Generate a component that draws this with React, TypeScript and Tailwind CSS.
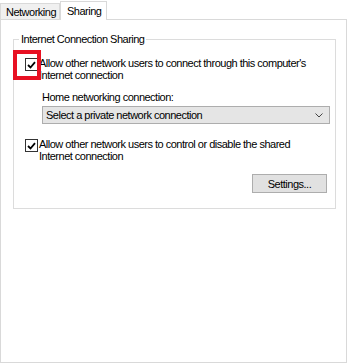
const font = { fontFamily: '"Liberation Sans", Arial, sans-serif' };

function CheckBox({ highlight }: { highlight?: boolean }) {
  return (
    <div className="relative mt-[1px] w-[13px] h-[13px] shrink-0 border border-[#333333] bg-white flex items-center justify-center">
      <svg width="9" height="8" viewBox="0 0 9 8">
        <path d="M1 4 L3.5 6.5 L8 1.2" fill="none" stroke="#000" strokeWidth="1.8" />
      </svg>
      {highlight && (
        <div className="absolute left-[-13px] top-[-9px] w-[28px] h-[30px] border-[4px] border-[#e81123]" />
      )}
    </div>
  );
}

export default function App() {
  return (
    <div
      className="w-[350px] h-[364px] bg-white text-[11px] tracking-[-0.5px] text-black leading-[12px] whitespace-nowrap"
      style={font}
    >
      <div className="flex items-end h-[19px]">
        <div className="h-[16px] w-[60px] pl-[5px] border border-b-0 border-[#d9d9d9] bg-[#f0f0f0] flex items-center">
          Networking
        </div>
        <div className="h-[19px] w-[47px] -mb-px relative z-10 pl-[6px] border border-b-0 border-[#d9d9d9] bg-white flex items-center">
          Sharing
        </div>
      </div>
      <div className="w-[347px] h-[344px] border border-[#d9d9d9] bg-white pt-[19px] pl-[12px]">
        <div className="relative w-[323px] h-[170px] border border-[#dcdcdc]">
          <div className="absolute left-[5px] top-[-7px] bg-white px-[2px]">Internet Connection Sharing</div>
          <div className="flex items-start gap-[1px] pl-[11px] pt-[17px]">
            <CheckBox highlight />
            <div>
              <div>Allow other network users to connect through this computer's</div>
              <div>Internet connection</div>
            </div>
          </div>
          <div className="pl-[28px] pt-[10px]">
            <div>Home networking connection:</div>
            <div className="mt-[3px] w-[288px] h-[18px] border border-[#adadad] bg-[#e5e5e5] flex items-center justify-between pl-[3px] pr-[6px]">
              <span>Select a private network connection</span>
              <svg width="8" height="5" viewBox="0 0 8 5">
                <path d="M0.5 0.5 L4 4 L7.5 0.5" fill="none" stroke="#444" strokeWidth="1" />
              </svg>
            </div>
          </div>
          <div className="flex items-start gap-[1px] pl-[11px] pt-[14px]">
            <CheckBox />
            <div>
              <div>Allow other network users to control or disable the shared</div>
              <div>Internet connection</div>
            </div>
          </div>
          <div className="flex justify-end pr-[8px] pt-[12px]">
            <div className="w-[75px] h-[19px] border border-[#adadad] bg-[#e1e1e1] flex items-center justify-center">
              Settings...
            </div>
          </div>
        </div>
      </div>
    </div>
  );
}
